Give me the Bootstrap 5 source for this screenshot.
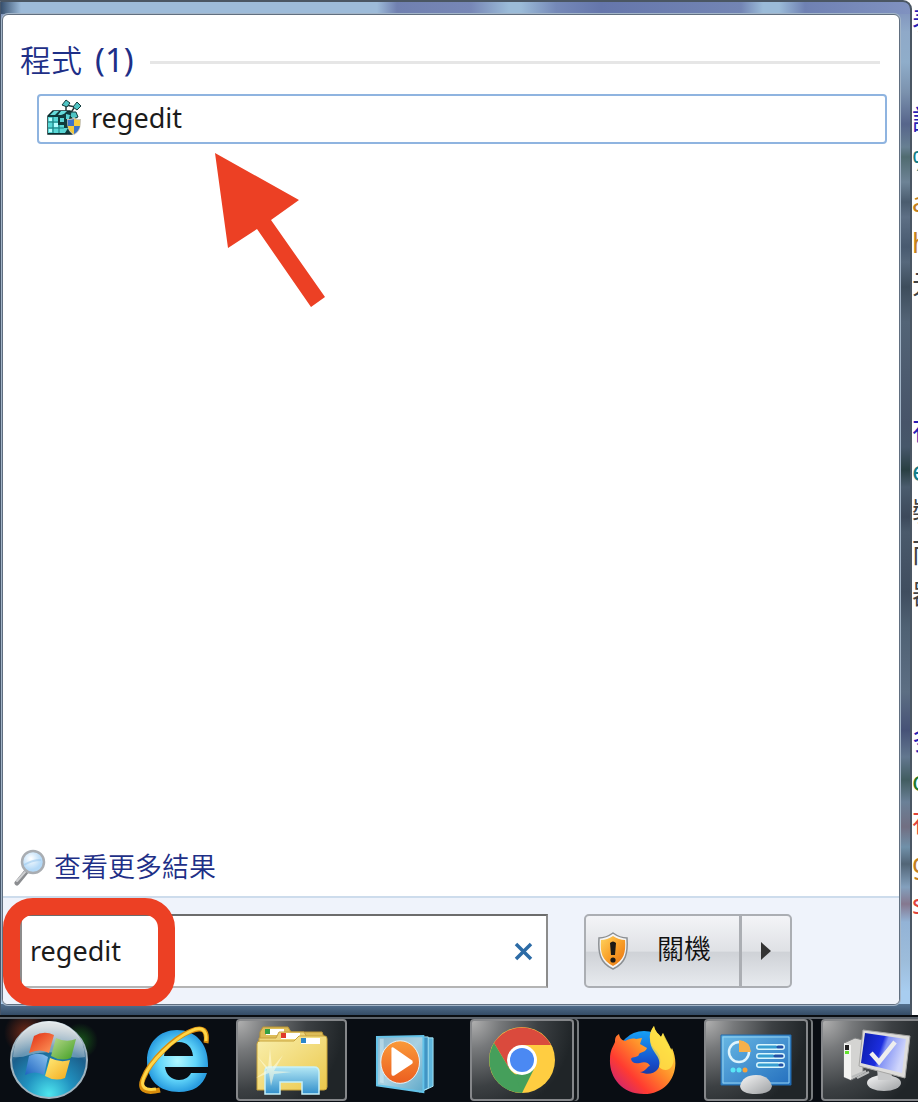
<!DOCTYPE html>
<html lang="zh-Hant">
<head>
<meta charset="utf-8">
<meta name="viewport" content="width=device-width, initial-scale=1">
<title>regedit</title>
<link href="https://cdn.jsdelivr.net/npm/bootstrap@5.3.0/dist/css/bootstrap.min.css" rel="stylesheet">
<style>
body{font-family:"Noto Sans","Noto Sans CJK TC",sans-serif;background:#fff;color:#1b1b1b;font-size:27px;line-height:41px}
svg{display:block;flex:none}
/* glass frame of the start menu */
.glass{padding:12px 10px 10px 1px;border:2px solid #4a5663;border-left:1px solid #46566a;border-radius:0 9px 0 0;
 background:
 linear-gradient(#547190,#344c66) bottom/100% 11px no-repeat,
 linear-gradient(90deg,#37506e 0,#9dbbd9 20px,#9dbbd9 376px,#7080b0 396px,#7787b6 470px,#9bbbd8 508px,#9bbbd8 520px,#7589b8 555px,#6576ab 600px,#7385b4 740px,#9bbbd8 762px,#9bbbd8 778px,#6f81b3 804px,#8092c0) top/100% 12px no-repeat,
 linear-gradient(#7b8cba 0,#8fa9c8 30px,#8fadca 60px,#7b92ae 90px,#56658b 122px,#677f92 145px,#506b70 155px,#6d8396 180px,#4a5c6f 200px,#5d6f85 215px,#485a70 245px,#56687c 260px,#3d4d5c 285px,#536477 320px,#475469 420px,#46576a 445px,#293f43 468px,#4a5c6e 485px,#3c495b 515px,#4a5a6c 530px,#3f4d5f 590px,#4f6174 625px,#5c6e83 690px,#465277 728px,#62778f 755px,#425d61 778px,#6a8097 800px,#716f82 825px,#7090a9 845px,#526577 862px,#83a0bd 885px,#85788f 902px,#93b3d6 920px,#9dbddb 960px,#a8cdf0 990px)}
.menu-panel{background:#fff;border:1px solid #616f80;border-radius:6px;box-shadow:0 0 0 1px #a3b5c8}
.group-title{font-size:31px;line-height:42px;color:#1e2f87;font-weight:350}
.group-title span{font-size:33px;font-weight:400;margin-left:5px}
.group-rule{height:3px;background:#e6e6e6}
.results{padding:24px 12px 0 34px}
.group-head{margin:0 0 13px -17px;padding-right:7px}
.result{border:2px solid #8fb4e0;border-radius:4px;background:#fff;height:50px;padding:0 7px;gap:9px;color:#1b1b1b;text-decoration:none}
.result svg{margin-bottom:2px}
.result span{line-height:40px;padding-bottom:2px}
.arrow{left:212px;top:138px}
.more{color:#1e2f87;text-decoration:none;gap:7px;padding:0 10px 9px;font-weight:350}
.menu-foot{background:#eff3fb;border-top:2px solid #cddcec;border-radius:0 0 5px 5px;padding:16px 107px 16px 17px;gap:36px}
.search-box{height:74px;background:#fff;border:2px solid #6c6c6c;border-color:#6c6c6c #8c8c8c #b4b4b4 #8c8c8c}
.search-box input{border:0;outline:0;background:none;padding:0 8px 2px;color:#1b1b1b;min-width:0}
.clear{border:0;background:none;padding:0 13px}
.ring{left:-17px;top:-16px;width:172px;height:108px;border:17px solid #ec4024;border-radius:30px;pointer-events:none}
.power{height:74px}
.power .btn{--bs-btn-padding-x:0px;--bs-btn-padding-y:0px;border:2px solid #abaeb3;border-radius:5px;background:linear-gradient(#f3f4f7,#dfe1e5 50%,#cfd2d7 52%,#e7eaee);font-size:27px;font-weight:350;color:#111}
.power .shut{border-radius:5px 0 0 5px}
.power .opts{border-radius:0 5px 5px 0}
.shut{width:157px;padding-left:11px!important;gap:28px}
.shut span{padding-bottom:3px}
.opts{width:52px}
/* page visible beside the menu */
.behind{width:6px;overflow:hidden;line-height:41px;color:#444}
.behind p{margin:0;white-space:nowrap}
.behind .first{margin-bottom:58px}
.c-link{color:#2a1fb5}.c-teal{color:#167d86}.c-or{color:#c58220}.c-green{color:#237a2a}.c-red{color:#e0453c}
/* taskbar */
.taskbar{height:85px;background:#090d13;border-top:2px solid #5d646c;box-shadow:0 -2px 0 #0a0e12;gap:6px;overflow:hidden;position:relative}
.task{width:111px;height:82px;flex:none;border:0;padding:0;background:none;display:flex;align-items:center;justify-content:center}
.orb{width:98px;margin-right:15px}
.open{border:2px solid #85878a;border-radius:4px;background:radial-gradient(circle at 0 0,#b0b0b0 0,#77797b 22%,#3c4043 52%,#202528 80%)}
.stacked{width:104px;margin-right:7px;box-shadow:3px 0 0 #15191c,5px 0 0 #777b7e}
</style>
</head>
<body class="d-flex flex-column min-vh-100 overflow-hidden">
<svg width="0" height="0" class="position-absolute" aria-hidden="true"><defs>
<radialGradient id="gOrb" cx=".5" cy=".95" r=".9"><stop offset="0" stop-color="#4ee6ee"/><stop offset=".35" stop-color="#2192c0"/><stop offset=".7" stop-color="#1b5f8c"/><stop offset="1" stop-color="#8fa0a8"/></radialGradient>
<linearGradient id="gGloss" x2="0" y2="1"><stop stop-color="#fff" stop-opacity=".75"/><stop offset="1" stop-color="#fff" stop-opacity=".3"/></linearGradient>
<linearGradient id="gRed" x2="1" y2="1"><stop stop-color="#e02c12"/><stop offset="1" stop-color="#ff9a5c"/></linearGradient>
<linearGradient id="gGrn" x2="1" y2="1"><stop stop-color="#b9d98c"/><stop offset="1" stop-color="#3f9e22"/></linearGradient>
<linearGradient id="gBlu" x1="1" x2="0" y2="1"><stop stop-color="#8cc4f0"/><stop offset="1" stop-color="#1d63c0"/></linearGradient>
<linearGradient id="gYel" x2="1" y2="1"><stop stop-color="#ffec7a"/><stop offset="1" stop-color="#f3a91c"/></linearGradient>
<radialGradient id="gIe"><stop stop-color="#b0f6ff"/><stop offset=".6" stop-color="#62d6fa"/><stop offset="1" stop-color="#2a9de0"/></radialGradient>
<linearGradient id="gFold" x2="1" y2="1"><stop stop-color="#f9efad"/><stop offset="1" stop-color="#ebc84b"/></linearGradient>
<linearGradient id="gStand" x2="0" y2="1"><stop stop-color="#b4e8f5"/><stop offset="1" stop-color="#318fcb"/></linearGradient>
<linearGradient id="gCase" x2="1" y2="1"><stop stop-color="#86b6cf"/><stop offset=".5" stop-color="#a9d1e2"/><stop offset="1" stop-color="#5fa9c9"/></linearGradient>
<linearGradient id="gOr" x2="0" y2="1"><stop stop-color="#fa9a39"/><stop offset="1" stop-color="#ec5e20"/></linearGradient>
<linearGradient id="gFox" x1="1" y1="0" x2="0" y2="1"><stop offset=".15" stop-color="#ffdf3c"/><stop offset=".45" stop-color="#ff8a2a"/><stop offset=".7" stop-color="#ff3b31"/><stop offset="1" stop-color="#b51b90"/></linearGradient>
<linearGradient id="gGlobe" x2="0" y2="1"><stop stop-color="#16a0f5"/><stop offset=".6" stop-color="#164cc9"/><stop offset="1" stop-color="#1b2a80"/></linearGradient>
<linearGradient id="gCp" x2="1" y2="1"><stop stop-color="#68b8e4"/><stop offset="1" stop-color="#246fbe"/></linearGradient>
<linearGradient id="gGray" x2="1" y2="1"><stop stop-color="#f6f6f6"/><stop offset="1" stop-color="#9c9fa2"/></linearGradient>
<linearGradient id="gScr" x2="1" y2=".3"><stop stop-color="#0a1ba5"/><stop offset=".5" stop-color="#1c2ee0"/><stop offset=".6" stop-color="#8191f5"/><stop offset="1" stop-color="#cfd5fb"/></linearGradient>
<radialGradient id="gLens" cx=".4" cy=".35"><stop stop-color="#fff"/><stop offset="1" stop-color="#b4d9f7"/></radialGradient>
<linearGradient id="gShield" x2="1" y2="1"><stop stop-color="#ffd45e"/><stop offset=".5" stop-color="#f9a12a"/><stop offset="1" stop-color="#e8700f"/></linearGradient>
<radialGradient id="glR"><stop stop-color="#d8471c" stop-opacity=".5"/><stop offset="1" stop-color="#d8471c" stop-opacity="0"/></radialGradient>
<radialGradient id="glG"><stop stop-color="#27a01f" stop-opacity=".5"/><stop offset="1" stop-color="#27a01f" stop-opacity="0"/></radialGradient>
</defs></svg>

<div class="d-flex flex-grow-1">
 <main class="glass d-flex flex-grow-1">
  <div class="menu-panel d-flex flex-column flex-grow-1">
   <section class="results position-relative flex-grow-1">
    <div class="group-head d-flex align-items-center">
     <h1 class="group-title m-0 me-3">程式 <span>(1)</span></h1><div class="group-rule flex-grow-1 mt-1"></div>
    </div>
    <a href="#" class="result d-flex align-items-center">
     <svg width="36" height="38" viewBox="0 0 36 38"><path d="M2 17l5-5h17l6 5-4 18H2z" fill="#0f3c3d" stroke="#0c2b2c" stroke-width="1.500"/><path d="M20 13V5M20 6l9 2M28 9l-4 6" fill="none" stroke="#27383a" stroke-width="1.500"/><g fill="#4fc4c4" stroke="#143b3c" stroke-width="1"><path d="M20 1l4 3-3 4-5-2zM31 3l4 4-4 4-4-3zM25 13l5 0 2 5-5 2-3-3z"/></g><path d="M2 18h16v16H2z" fill="#58d8d7"/><path d="M8 12l5 0-4 4-5 0zM15 12l6 0-4 4-5 0z" fill="#66dcdb"/><path d="M7 18v16M13 18v16M2 23h16M2 29h16" stroke="#19797a"/><path d="M3 19h3v3H3zM8 24h4v4H8zM3 30h3v3H3z" fill="#b6ffff"/><path d="M12 17l6-2v6h4v7l-4 4v-6h-6z" fill="#103c3d"/><path d="M14 19h4v4h-4zM20 15l4 1-1 4h-3zM18 29h4l-3 5h-3z" fill="#5ad4d4"/><path d="M28 18c2 2 4 2 7 2 0 8-1 13-7 16-6-3-7-8-7-16 3 0 5 0 7-2z" fill="#cbc7b7"/><path d="M28 20v7h-6l-.5-6q4 0 6.500-1zM28 27h6q-1 5-6 8z" fill="#3c73c8"/><path d="M28 20q3 1.500 6 1v6h-6zM22 27h6v8q-5-3-6-8z" fill="#f4cb3d"/></svg>
     <span>regedit</span>
    </a>
    <svg class="arrow position-absolute" width="112" height="156" viewBox="0 0 112 156"><path d="M0 0l84 47-28 20 54 77-14 10-54-78-29 19z" fill="#ec4024"/></svg>
   </section>
   <a href="#" class="more d-flex align-items-center">
    <svg width="34" height="38" viewBox="0 0 34 38"><path d="M13 24L4 35" stroke="#8b8d90" stroke-width="5" stroke-linecap="round"/><path d="M12 24L4 33" stroke="#cfd0d2" stroke-width="2" stroke-linecap="round"/><circle cx="20" cy="14" r="11" fill="url(#gLens)" stroke="#a9adb2" stroke-width="2.500"/><path d="M11 17q8-5 17-5" fill="none" stroke="#9cc9ee" stroke-width="2" opacity=".6"/></svg>
    <span>查看更多結果</span>
   </a>
   <form class="menu-foot d-flex" onsubmit="return false">
    <div class="position-relative flex-grow-1">
     <div class="search-box d-flex align-items-center">
      <input class="flex-grow-1" type="text" value="regedit" aria-label="搜尋">
      <button type="button" class="clear" aria-label="清除"><svg width="19" height="19" viewBox="0 0 19 19"><path d="M2 2l15 15M17 2L2 17" stroke="#2c6ba6" stroke-width="3.500"/></svg></button>
     </div>
     <div class="ring position-absolute"></div>
    </div>
    <div class="power btn-group">
     <button type="button" class="btn shut d-flex align-items-center flex-grow-0"><svg width="32" height="38" viewBox="0 0 32 38"><path d="M16 1q7 5 14 5c1 15-1 25-14 31C3 31 1 21 2 6q7 0 14-5z" fill="#f4f4f4" stroke="#8b8f93" stroke-width="1.500"/><path d="M16 4q6 4 12 4c1 13-1 20-12 26C5 28 3 21 4 8q6 0 12-4z" fill="url(#gShield)"/><path d="M13 11q3-3 6 0l-1 12h-4z" fill="#1c1915"/><circle cx="16" cy="28" r="2.600" fill="#1c1915"/></svg><span>關機</span></button>
     <button type="button" class="btn opts d-flex align-items-center justify-content-center flex-grow-0" aria-label="更多選項"><svg width="10" height="18" viewBox="0 0 10 18"><path d="M0 0l10 9-10 9z" fill="#333"/></svg></button>
    </div>
   </form>
  </div>
 </main>
 <aside class="behind" aria-hidden="true">
  <p class="c-link first">表</p>
  <p class="c-link">諾</p><p class="c-teal">%</p><p class="c-or">a</p><p class="c-or">h</p><p>元</p>
  <p class="mt-5"><br></p><p class="c-link mt-3">在</p><p class="c-teal">el</p><p>裝</p><p>而</p><p>器</p>
  <p class="mt-5"><br></p><p class="c-link mt-3">多</p><p class="c-green">o</p><p class="c-red">在</p><p class="c-or">g</p><p class="c-red">s</p>
 </aside>
</div>

<nav class="taskbar d-flex">
 <button class="task orb" aria-label="開始"><svg width="98" height="82" viewBox="0 0 98 82"><circle cx="26" cy="14" r="22" fill="url(#glR)"/><circle cx="80" cy="22" r="18" fill="url(#glG)"/><circle cx="49" cy="41" r="38" fill="url(#gOrb)" stroke="#9fb4c0" stroke-width="2"/><path d="M13 38A36 36 0 0 1 85 38q-8 2-18-1-18-7-38-1-8 3-16 2z" fill="url(#gGloss)"/><path d="M34 17q10-6 20-1l-5 18q-9-5-20 0z" fill="url(#gRed)"/><path d="M56 19q10 5 20 1l-5 19q-10 4-20-2z" fill="url(#gGrn)"/><path d="M29 37q10-5 19 1l-4 18q-9-5-19 0z" fill="url(#gBlu)"/><path d="M50 39q10 5 20 2l-5 18q-10 4-20-2z" fill="url(#gYel)"/></svg></button>
 <button class="task" aria-label="Internet Explorer"><svg width="72" height="72" viewBox="1 1 72 72"><path fill-rule="evenodd" d="M39 7c18 0 31 13 31 34v3H27c1 8 7 13 14 13 6 0 10-3 12-7h16c-4 13-14 19-28 19C21 69 9 57 9 38S22 7 39 7zM26 33h29c-1-9-6-14-14-14-8 0-14 5-15 14z" fill="url(#gIe)"/><path d="M68 20c2-13-3-17-15-12C35 15 12 38 5 56c-4 10 1 15 17 11" fill="none" stroke="#d98d0c" stroke-width="5"/><path d="M68 18c1-12-5-15-15-10C35 16 12 39 6 54c-4 9 0 14 12 12" fill="none" stroke="#ffd647" stroke-width="3"/></svg></button>
 <button class="task open" aria-label="檔案總管"><svg width="74" height="72" viewBox="0 0 74 72"><path d="M5 8l3-5h25l3 5h31l3 8v40H4z" fill="#dcbc58" stroke="#b99433"/><path d="M11 5h18v6H11z" fill="#fff"/><path d="M10 5h5v5h-5z" fill="#35a043"/><path d="M4 14h17l3-6h25l4 7h17v42H4z" fill="#eed67b" stroke="#c6a041"/><path d="M26 9h19v6H26z" fill="#fff"/><path d="M26 9h5v5h-5z" fill="#e03a2a"/><path d="M2 20q0-3 3-3h34l5-5h26q2 0 2 3v48q0 3-3 3H2z" fill="url(#gFold)" stroke="#c8a33b"/><path d="M46 14h19v6H46z" fill="#fff"/><path d="M46 14h5v5h-5z" fill="#2c87ca"/><path d="M10 47q0-4 4-4h45q5 0 5 5v22H47V58H25v12H10z" fill="url(#gStand)" stroke="#c6f1fa" stroke-width="1.500"/><path d="M15 24l2 20 11-13-9 16 18 1-18 2-3 12-2-13-13 5 11-8-10-14 11 12z" fill="#fffde2" opacity=".55"/></svg></button>
 <button class="task" aria-label="Windows Media Player"><svg class="me-2 mt-2" width="60" height="60" viewBox="0 0 60 62"><path d="M48 4h11v50L48 59z" fill="#5eb5dc" stroke="#a8e5f7"/><path d="M45 3h9v53l-9 4z" fill="#4195c4" stroke="#a8e5f7"/><path d="M1 3l48-1v58L1 53z" fill="url(#gCase)" stroke="#64c3e9" stroke-width="2"/><path d="M4 5h4v46l-4-1z" fill="#d5eff8" opacity=".5"/><ellipse cx="25" cy="29" rx="20" ry="22" fill="url(#gOr)" stroke="#e8f4fa" stroke-width="1"/><path d="M16 15q0-2 2-1l19 13q2 2 0 4L19 43q-3 1-3-2z" fill="#fff"/></svg></button>
 <button class="task open stacked" aria-label="Google Chrome"><svg width="68" height="68" viewBox="0 0 68 68"><circle cx="34" cy="34" r="33" fill="#ffcd41"/><path d="M34 19h29A33 33 0 0 0 6 17l15 25z" fill="#da4a3d"/><path d="M6 17l15 25q5 9 16 7L34 67A33 33 0 0 1 6 17z" fill="#459f5b"/><path d="M46 43L34 67l-7-18z" fill="#459f5b"/><circle cx="34" cy="34" r="15" fill="#fff"/><circle cx="34" cy="34" r="12" fill="#4b89f3"/></svg></button>
 <button class="task" aria-label="Firefox"><svg width="68" height="70" viewBox="0 0 68 70"><circle cx="35" cy="33" r="27" fill="url(#gGlobe)"/><path d="M10 9c1 5 3 6 6 7 4-2 7-3 11-2l6-1-2 6 7 4c-1 4-6 4-8 6 0 4-7 2-8 5 1 4 4 5 9 4 5-2 9 0 10 3-3 0-4 6-10 6 14 6 22-4 20-14-1-7-9-9-10-19C40 10 42 5 45 1c1 6 5 8 7 11l2-4c2 8 6 11 8 17l1-2c10 22-3 46-28 46C12 69 0 51 1 34c0-9 3-12 5-17 0-5 1-6 4-8z" fill="url(#gFox)"/><path d="M45 1c1 6 5 8 7 11l2-4c7 14 14 24 9 33-3 5-9 5-13 1 3-12-9-14-9-28 0-6 1-9 4-13z" fill="#fee548" opacity=".8"/></svg></button>
 <button class="task open stacked" aria-label="控制台"><svg class="mt-2" width="72" height="62" viewBox="0 0 72 62"><path d="M1 2h70v50H1z" fill="url(#gCp)" stroke="#1e68ac"/><path d="M3 4h66v46H3z" fill="none" stroke="#94d3f2"/><circle cx="19" cy="19" r="10" fill="none" stroke="#dff4fc" stroke-width="2.500"/><path d="M19 19V7q11 1 12 12z" fill="#f6b04b"/><g stroke-linecap="round"><path d="M39 14h23M39 23h23M39 32h23" stroke="#d9f6fd" stroke-width="6"/><path d="M39 14h17M39 23h14M39 32h19" stroke="#379ed1" stroke-width="3"/><path d="M58 14h4M55 23h7M60 32h2" stroke="#214fa5" stroke-width="3"/></g><circle cx="13" cy="37" r="2.500" fill="#59e5f6"/><circle cx="19" cy="37" r="2.500" fill="#59e5f6"/><circle cx="25" cy="37" r="2.500" fill="#f6a33b"/><path d="M20 53q3-11 16-11t16 11q-1 8-16 8t-16-8z" fill="url(#gGray)"/></svg></button>
 <button class="task open" aria-label="系統"><svg width="70" height="64" viewBox="0 0 70 64"><path d="M2 15l11-5 8 2v34L9 52l-7-3z" fill="#d4d4d2" stroke="#7d7f80"/><path d="M2 15l7 2v35l-7-3z" fill="#f4f4f2"/><path d="M3 17h4v5H3z" fill="#222"/><path d="M3 23h4v3H3z" fill="#63e52d"/><path d="M10 49l14-6M15 50l12-6" stroke="#b9bbbb" stroke-width="2"/><ellipse cx="42" cy="55" rx="17" ry="8" fill="url(#gGray)"/><path d="M35 40h16l-2 12H36z" fill="#c7c8c9"/><path d="M21 2l47 6-5 42-46-12z" fill="#dedddb" stroke="#a6a6a4"/><path d="M23 5l41 6-4 34-41-10z" fill="url(#gScr)"/><path d="M29 25l8 9 16-20" fill="none" stroke="#eee" stroke-width="4.500"/></svg></button>
</nav>
<script src="https://cdn.jsdelivr.net/npm/bootstrap@5.3.0/dist/js/bootstrap.bundle.min.js"></script>
</body>
</html>
